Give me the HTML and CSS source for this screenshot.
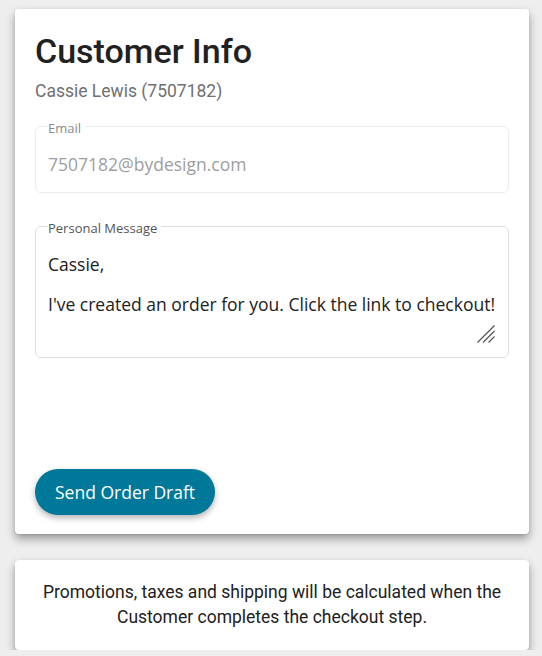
FILE: index.html
```html
<!DOCTYPE html>
<html>
<head>
<meta charset="utf-8">
<link rel="stylesheet" href="styles.css">
</head>
<body>
<div class="page">
  <section class="card main">
    <h1 class="title">Customer Info</h1>
    <div class="subtitle">Cassie Lewis (7507182)</div>
    <fieldset class="field email">
      <legend class="legend legend-light">Email</legend>
      <div class="value muted">7507182@bydesign.com</div>
    </fieldset>
    <fieldset class="field message">
      <legend class="legend">Personal Message</legend>
      <div class="msg">
        <p class="line">Cassie,</p>
        <p class="line last">I've created an order for you. Click the link to checkout!</p>
      </div>
      <svg class="grip" width="18" height="18" viewBox="0 0 18 18">
        <path d="M17.5 0.5 L0.5 17.5 M17.5 6 L6 17.5 M17.5 11.5 L11.5 17.5" stroke="#555" stroke-width="1.2" fill="none"/>
      </svg>
    </fieldset>
    <div class="spacer"></div>
    <button class="btn">Send Order Draft</button>
  </section>
  <section class="card note">
    <p class="note-text">Promotions, taxes and shipping will be calculated when the Customer completes the checkout step.</p>
  </section>
</div>
</body>
</html>
```
FILE: styles.css
```css
html, body {
  margin: 0;
  padding: 0;
  background: #eeeeee;
}
.page {
  padding: 9px 0 0 15px;
  display: flex;
  flex-direction: column;
  gap: 26px;
}
.card {
  width: 514px;
  box-sizing: border-box;
  background: #ffffff;
  border-radius: 4px;
  box-shadow: 0 5px 10px rgba(0,0,0,0.35), 0 1px 3px rgba(0,0,0,0.1);
}
.main {
  padding: 22px 20px 19px 20px;
  display: flex;
  flex-direction: column;
}
.title {
  margin: 0 0 0 0;
  font-family: Roboto, "Liberation Sans", sans-serif;
  font-weight: 500;
  font-size: 34px;
  line-height: 40px;
  color: #212121;
}
.subtitle {
  margin: 9px 0 0 0;
  font-family: Roboto, "Liberation Sans", sans-serif;
  font-size: 17.5px;
  line-height: 22px;
  color: #707070;
}
.field {
  margin: 0;
  border: 1px solid #ebebeb;
  border-radius: 6px;
  padding: 0 12px;
  box-sizing: border-box;
}
.email {
  margin-top: 14px;
  height: 77px;
}
.message {
  margin-top: 23px;
  height: 142px;
  border-color: #dedede;
}
.legend {
  font-family: "Open Sans", sans-serif;
  font-size: 13px;
  line-height: 16px;
  color: #555555;
  padding: 4px 4px 0 0;
  margin-left: 0;
}
.legend-light {
  color: #8a8a8a;
}
.value {
  font-family: "Open Sans", sans-serif;
  font-size: 17.5px;
  line-height: 24px;
  margin-top: 16px;
}
.muted {
  color: #9e9e9e;
}
.msg {
  font-family: "Open Sans", sans-serif;
  font-size: 17.5px;
  line-height: 24px;
  color: #212121;
  margin-top: 16px;
}
.line {
  margin: 0 0 16px 0;
}
.line.last {
  margin-bottom: 0;
}
.grip {
  display: block;
  margin: 9px 1px 0 auto;
}
.spacer {
  height: 111px;
}
.btn {
  align-self: flex-start;
  height: 46px;
  padding: 0 20px;
  border: none;
  border-radius: 23px;
  background: #00789a;
  color: #ffffff;
  font-family: "Open Sans", sans-serif;
  font-size: 17.5px;
  box-shadow: 0 3px 6px rgba(0,0,0,0.3);
}
.note {
  padding: 20px 20px;
}
.note-text {
  margin: 0;
  text-align: center;
  font-family: Roboto, "Liberation Sans", sans-serif;
  font-size: 17.5px;
  line-height: 25px;
  color: #212121;
}
```
